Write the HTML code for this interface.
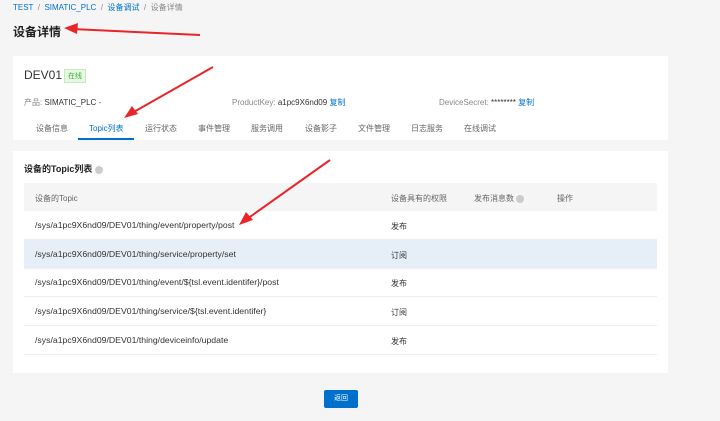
<!DOCTYPE html>
<html><head><meta charset="utf-8"><style>
*{margin:0;padding:0;box-sizing:border-box}
body{width:720px;height:421px;background:#f5f5f5;font-family:"Liberation Sans","Noto Sans CJK SC",sans-serif;position:relative;overflow:hidden;color:#333}
.a{position:absolute;white-space:nowrap}
.card{position:absolute;background:#fff}
.bl{color:#0070cc}
.g{color:#888}
.s{font-size:8px}
.row{position:absolute;left:24px;width:633px;height:29px;border-bottom:1px solid #eee;font-size:8px}
.row span{position:absolute;top:10px}
.row span.t{font-size:8.7px;top:9px}
</style></head><body>
<div class="a s" style="left:13px;top:2px"><span class="bl">TEST</span> <span class="g">&nbsp;/&nbsp;</span> <span class="bl">SIMATIC_PLC</span> <span class="g">&nbsp;/&nbsp;</span> <span class="bl">设备调试</span> <span class="g">&nbsp;/&nbsp;</span> <span class="g">设备详情</span></div>
<div class="a" style="left:13px;top:23px;font-size:12px;font-weight:bold;color:#222">设备详情</div>

<div class="card" style="left:13px;top:56px;width:655px;height:84px"></div>
<div class="a" style="left:24px;top:68px;font-size:12px;color:#333">DEV01</div>
<div class="a" style="left:64px;top:69px;font-size:7px;color:#3cb034;background:#e8f7e4;border:1px solid #c6ecbe;padding:1px 3px">在线</div>
<div class="a s g" style="left:24px;top:97px">产品: <span style="color:#333">SIMATIC_PLC</span> <span class="bl">-</span></div>
<div class="a s g" style="left:232px;top:97px">ProductKey: <span style="color:#333">a1pc9X6nd09</span> <span class="bl">复制</span></div>
<div class="a s g" style="left:439px;top:97px">DeviceSecret: <span style="color:#333">********</span> <span class="bl">复制</span></div>
<div class="a s" style="left:36px;top:123px;color:#666">设备信息</div>
<div class="a s bl" style="left:89px;top:123px">Topic列表</div>
<div class="a" style="left:78px;top:138px;width:56px;height:2px;background:#0070cc"></div>
<div class="a s" style="left:145px;top:123px;color:#666">运行状态</div>
<div class="a s" style="left:198px;top:123px;color:#666">事件管理</div>
<div class="a s" style="left:251px;top:123px;color:#666">服务调用</div>
<div class="a s" style="left:305px;top:123px;color:#666">设备影子</div>
<div class="a s" style="left:358px;top:123px;color:#666">文件管理</div>
<div class="a s" style="left:411px;top:123px;color:#666">日志服务</div>
<div class="a s" style="left:464px;top:123px;color:#666">在线调试</div>

<div class="card" style="left:13px;top:151px;width:655px;height:222px"></div>
<div class="a" style="left:24px;top:162px;font-size:9px;font-weight:bold;color:#222">设备的Topic列表 <span style="display:inline-block;width:8px;height:8px;border-radius:50%;background:#ccc;vertical-align:middle"></span></div>
<div class="a" style="left:24px;top:183px;width:633px;height:28px;background:#f5f5f5;font-size:8px;color:#666">
<span class="a" style="left:11px;top:10px">设备的Topic</span>
<span class="a" style="left:367px;top:10px">设备具有的权限</span>
<span class="a" style="left:450px;top:10px">发布消息数 <span style="display:inline-block;width:8px;height:8px;border-radius:50%;background:#ccc;vertical-align:middle"></span></span>
<span class="a" style="left:533px;top:10px">操作</span></div>
<div class="row" style="top:211px"><span class="t" style="left:11px">/sys/a1pc9X6nd09/DEV01/thing/event/property/post</span><span style="left:367px">发布</span></div>
<div class="row" style="top:240px;background:#e6eff8"><span class="t" style="left:11px">/sys/a1pc9X6nd09/DEV01/thing/service/property/set</span><span style="left:367px">订阅</span></div>
<div class="row" style="top:268px"><span class="t" style="left:11px">/sys/a1pc9X6nd09/DEV01/thing/event/${tsl.event.identifer}/post</span><span style="left:367px">发布</span></div>
<div class="row" style="top:297px"><span class="t" style="left:11px">/sys/a1pc9X6nd09/DEV01/thing/service/${tsl.event.identifer}</span><span style="left:367px">订阅</span></div>
<div class="row" style="top:326px"><span class="t" style="left:11px">/sys/a1pc9X6nd09/DEV01/thing/deviceinfo/update</span><span style="left:367px">发布</span></div>

<div class="a" style="left:324px;top:390px;width:34px;height:18px;background:#0070cc;border-radius:2px;color:#fff;font-size:7px;text-align:center;line-height:18px">返回</div>

<svg class="a" style="left:0;top:0" width="720" height="421">
<g fill="#e8262a" stroke="#e8262a">
<line x1="200" y1="35" x2="72" y2="29" stroke-width="2"/>
<polygon points="64,28 78,23 77,34" stroke="none"/>
<line x1="213" y1="67" x2="132" y2="113" stroke-width="2"/>
<polygon points="124,118 132,106 138,114" stroke="none"/>
<line x1="330" y1="160" x2="247" y2="219" stroke-width="2"/>
<polygon points="239,225 246,212 253,220" stroke="none"/>
</g></svg>
</body></html>
